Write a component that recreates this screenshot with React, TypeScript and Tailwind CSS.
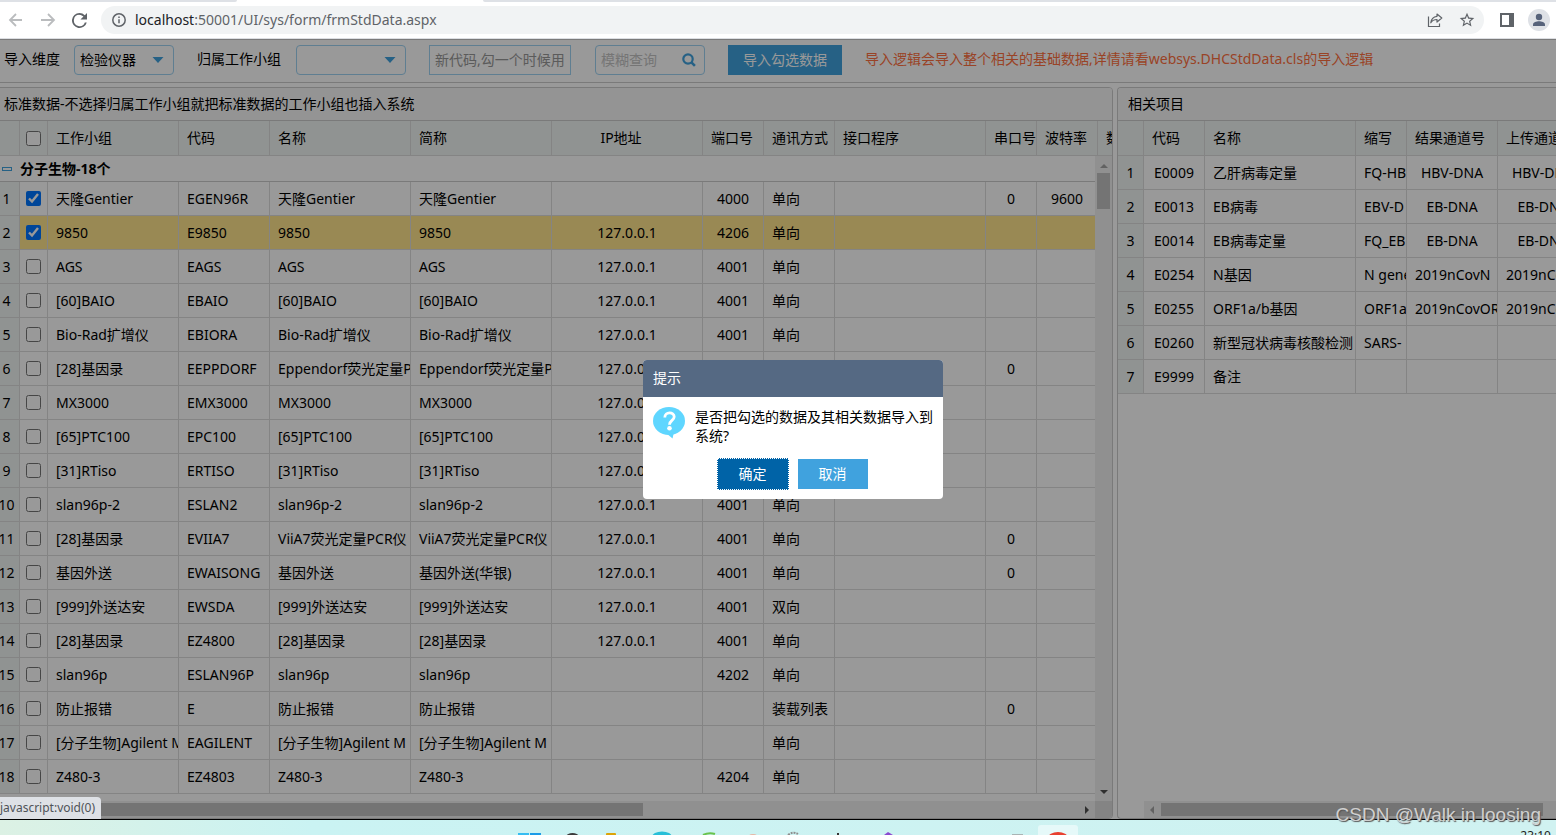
import React from "react";

type Align = "left" | "center";
type Column = { title: string; width: number; align: Align; headAlign?: Align };

const mainColumns: Column[] = [
  { title: "工作小组", width: 131, align: "left" },
  { title: "代码", width: 91, align: "left" },
  { title: "名称", width: 141, align: "left" },
  { title: "简称", width: 141, align: "left" },
  { title: "IP地址", width: 151, align: "center", headAlign: "center" },
  { title: "端口号", width: 61, align: "center" },
  { title: "通讯方式", width: 71, align: "left" },
  { title: "接口程序", width: 151, align: "left" },
  { title: "串口号", width: 51, align: "center" },
  { title: "波特率", width: 61, align: "center" },
  { title: "数据位", width: 61, align: "center" },
];

const ip = "127.0.0.1";
const mainRows: string[][] = [
  ["天隆Gentier", "EGEN96R", "天隆Gentier", "天隆Gentier", "", "4000", "单向", "", "0", "9600", ""],
  ["9850", "E9850", "9850", "9850", ip, "4206", "单向", "", "", "", ""],
  ["AGS", "EAGS", "AGS", "AGS", ip, "4001", "单向", "", "", "", ""],
  ["[60]BAIO", "EBAIO", "[60]BAIO", "[60]BAIO", ip, "4001", "单向", "", "", "", ""],
  ["Bio-Rad扩增仪", "EBIORA", "Bio-Rad扩增仪", "Bio-Rad扩增仪", ip, "4001", "单向", "", "", "", ""],
  ["[28]基因录", "EEPPDORF", "Eppendorf荧光定量PCR仪", "Eppendorf荧光定量PCR仪", ip, "4001", "单向", "", "0", "", ""],
  ["MX3000", "EMX3000", "MX3000", "MX3000", ip, "4001", "单向", "", "", "", ""],
  ["[65]PTC100", "EPC100", "[65]PTC100", "[65]PTC100", ip, "4001", "单向", "", "", "", ""],
  ["[31]RTiso", "ERTISO", "[31]RTiso", "[31]RTiso", ip, "4001", "单向", "", "", "", ""],
  ["slan96p-2", "ESLAN2", "slan96p-2", "slan96p-2", ip, "4001", "单向", "", "", "", ""],
  ["[28]基因录", "EVIIA7", "ViiA7荧光定量PCR仪", "ViiA7荧光定量PCR仪", ip, "4001", "单向", "", "0", "", ""],
  ["基因外送", "EWAISONG", "基因外送", "基因外送(华银)", ip, "4001", "单向", "", "0", "", ""],
  ["[999]外送达安", "EWSDA", "[999]外送达安", "[999]外送达安", ip, "4001", "双向", "", "", "", ""],
  ["[28]基因录", "EZ4800", "[28]基因录", "[28]基因录", ip, "4001", "单向", "", "", "", ""],
  ["slan96p", "ESLAN96P", "slan96p", "slan96p", "", "4202", "单向", "", "", "", ""],
  ["防止报错", "E", "防止报错", "防止报错", "", "", "装载列表", "", "0", "", ""],
  ["[分子生物]Agilent M", "EAGILENT", "[分子生物]Agilent M", "[分子生物]Agilent M", "", "", "单向", "", "", "", ""],
  ["Z480-3", "EZ4803", "Z480-3", "Z480-3", "", "4204", "单向", "", "", "", ""],
];

const itemColumns: Column[] = [
  { title: "代码", width: 61, align: "center" },
  { title: "名称", width: 151, align: "left" },
  { title: "缩写", width: 51, align: "left" },
  { title: "结果通道号", width: 91, align: "center" },
  { title: "上传通道号", width: 91, align: "center" },
];

const itemRows: string[][] = [
  ["E0009", "乙肝病毒定量", "FQ-HB", "HBV-DNA", "HBV-DNA"],
  ["E0013", "EB病毒", "EBV-D", "EB-DNA", "EB-DNA"],
  ["E0014", "EB病毒定量", "FQ_EB", "EB-DNA", "EB-DNA"],
  ["E0254", "N基因", "N gene", "2019nCovN", "2019nCovN"],
  ["E0255", "ORF1a/b基因", "ORF1ab", "2019nCovORF", "2019nCovORF"],
  ["E0260", "新型冠状病毒核酸检测", "SARS-", "", ""],
  ["E9999", "备注", "", "", ""],
];

const line = "border-[#dddddd]";
const alignClass: Record<Align, string> = { left: "text-left", center: "text-center" };

function Cols({ columns, withCheck }: { columns: Column[]; withCheck: boolean }) {
  return (
    <colgroup>
      <col className="w-[26px]" />
      {withCheck && <col className="w-7" />}
      {columns.map((c) => (
        <col key={c.title} style={{ width: c.width }} />
      ))}
    </colgroup>
  );
}

function HeadTable({ columns, withCheck }: { columns: Column[]; withCheck: boolean }) {
  return (
    <table className="w-px table-fixed border-separate border-spacing-0">
      <Cols columns={columns} withCheck={withCheck} />
      <thead>
        <tr className="h-[35px] bg-[#f1f5f4]">
          <th aria-label="序号" className={`border-r border-b ${line}`} />
          {withCheck && (
            <th className={`border-r border-b p-0 ${line}`}>
              <input type="checkbox" aria-label="全选" className="mx-auto block size-[15px]" />
            </th>
          )}
          {columns.map((c) => (
            <th
              key={c.title}
              scope="col"
              className={`overflow-hidden border-r border-b pl-2 font-normal whitespace-nowrap ${line} ${
                c.headAlign === "center" ? "pr-5 text-center" : "pr-0 text-left"
              }`}
            >
              {c.title}
            </th>
          ))}
        </tr>
      </thead>
    </table>
  );
}

function BodyRow({ index, row, columns, withCheck, checked, selected }: {
  index: number;
  row: string[];
  columns: Column[];
  withCheck: boolean;
  checked?: boolean;
  selected?: boolean;
}) {
  return (
    <tr className={`h-[34px] ${selected ? "bg-[#ffe48d]" : "bg-white"}`}>
      <td className={`border-r border-b bg-[#f1f5f4] p-0 text-center ${line}`}>{index + 1}</td>
      {withCheck && (
        <td className={`border-r border-b p-0 ${line}`}>
          <input
            type="checkbox"
            aria-label={row[0]}
            defaultChecked={checked}
            className="mx-auto block size-[15px]"
          />
        </td>
      )}
      {columns.map((c, i) => (
        <td
          key={c.title}
          className={`overflow-hidden border-r border-b px-2 py-0 whitespace-nowrap ${line} ${alignClass[c.align]}`}
        >
          {row[i]}
        </td>
      ))}
    </tr>
  );
}

function Caret({ dir, className }: { dir: "up" | "down" | "left" | "right"; className: string }) {
  const points = {
    up: "0,7 8,7 4,3",
    down: "0,2 8,2 4,6",
    left: "6,0 6,8 2,4",
    right: "2,0 2,8 6,4",
  }[dir];
  return (
    <svg viewBox="0 0 8 8" className={`size-2 ${className}`}>
      <polygon points={points} fill="currentColor" />
    </svg>
  );
}

function Combo({ id, value, className }: { id: string; value: string; className: string }) {
  return (
    <div className={`relative h-[30px] ${className}`}>
      <select
        id={id}
        defaultValue={value}
        className="h-full w-full appearance-none rounded-sm border border-[#9ed2f2] bg-white pl-[5px] text-sm text-black"
      >
        <option value={value}>{value}</option>
      </select>
      <svg viewBox="0 0 12 6" className="pointer-events-none absolute top-3 right-[10px] h-[6px] w-3">
        <polygon points="0.5,0 11.5,0 6,6" fill="#40a2de" />
      </svg>
    </div>
  );
}

function BrowserBar() {
  return (
    <header className="shrink-0 border-b border-[#dcdee2] bg-white">
      <div className="flex h-[2px]">
        <div className="w-[237px] rounded-br-sm bg-[#dee1e6]" />
        <div className="w-[246px]" />
        <div className="flex-1 rounded-bl-sm bg-[#dee1e6]" />
      </div>
      <div className="flex h-9 items-center pr-[6px] pl-2">
        <button aria-label="后退" className="text-[#babcbe]">
          <svg viewBox="0 0 16 16" className="size-4" fill="none" stroke="currentColor" strokeWidth="1.8">
            <path d="M14 8H2M8 2L2 8l6 6" />
          </svg>
        </button>
        <button aria-label="前进" className="ml-4 text-[#babcbe]">
          <svg viewBox="0 0 16 16" className="size-4" fill="none" stroke="currentColor" strokeWidth="1.8">
            <path d="M1 8h12M8 2l6 6-6 6" />
          </svg>
        </button>
        <button aria-label="重新加载" className="ml-4 text-[#5f6368]">
          <svg viewBox="4 4 16 16" className="size-[15px]" fill="currentColor">
            <path d="M17.65 6.35A7.96 7.96 0 0 0 12 4a8 8 0 1 0 7.73 10h-2.08A6 6 0 1 1 12 6c1.66 0 3.14.69 4.22 1.78L13 11h7V4z" />
          </svg>
        </button>
        <div className="ml-[14px] flex h-7 flex-1 items-center rounded-full bg-[#f1f3f4] pr-[9px] pl-[11px]">
          <svg viewBox="0 0 14 14" className="size-[14px] text-[#5f6368]" fill="none" stroke="currentColor" strokeWidth="1.5">
            <circle cx="7" cy="7" r="6.2" />
            <path d="M7 6.2v4M7 3.4V5" />
          </svg>
          <p className="ml-[9px] flex-1 text-sm leading-5 text-[#5f6368]">
            <span className="text-[#202124]">localhost</span>:50001/UI/sys/form/frmStdData.aspx
          </p>
          <button aria-label="分享" className="text-[#5f6368]">
            <svg viewBox="0 0 16 16" className="size-4" fill="none" stroke="currentColor" strokeWidth="1.2">
              <path d="M1.500 4.500v10h11v-3" />
              <path d="M10 2l4.800 4-4.800 4V7.500C7 7.500 5 8.500 3.800 10.800 4.200 7.200 6 4.800 10 4.300z" strokeLinejoin="round" />
            </svg>
          </button>
          <button aria-label="收藏" className="ml-4 text-[#5f6368]">
            <svg viewBox="1 1 22 22" className="size-4" fill="currentColor">
              <path d="M22 9.240l-7.190-.62L12 2 9.190 8.630 2 9.240l5.460 4.730L5.820 21 12 17.270 18.180 21l-1.630-7.030L22 9.240zM12 15.400l-3.760 2.270 1-4.280-3.320-2.880 4.380-.38L12 6.100l1.710 4.040 4.380.38-3.320 2.880 1 4.280L12 15.400z" />
            </svg>
          </button>
        </div>
        <button aria-label="侧边栏" className="ml-4 text-[#5f6368]">
          <svg viewBox="0 0 14 14" className="size-[14px]" fill="currentColor">
            <path d="M0 0h14v14H0zM2 2v10h7V2z" fillRule="evenodd" />
          </svg>
        </button>
        <button aria-label="用户" className="ml-[14px] text-[#56627a]">
          <svg viewBox="0 0 22 22" className="size-[22px]">
            <circle cx="11" cy="11" r="11" fill="#dee1e6" />
            <circle cx="11" cy="8" r="3.200" fill="currentColor" />
            <path d="M5 17v-1.500c0-2.300 3.500-3.300 6-3.300s6 1 6 3.300V17z" fill="currentColor" />
          </svg>
        </button>
      </div>
    </header>
  );
}

function Toolbar() {
  return (
    <form className="flex h-11 shrink-0 items-center border-y border-[#cccccc] bg-white pb-[2px] pl-1">
      <label htmlFor="dimension" className="pb-[2px]">导入维度</label>
      <Combo id="dimension" value="检验仪器" className="ml-[14px] w-[100px]" />
      <label htmlFor="group" className="ml-[23px] pb-[2px]">归属工作小组</label>
      <Combo id="group" value="" className="ml-[15px] w-[110px]" />
      <input
        aria-label="新代码"
        placeholder="新代码,勾一个时候用"
        className="ml-[23px] h-[30px] w-[142px] border border-[#9ed2f2] bg-white px-[5px] pb-[2px] text-sm placeholder:text-[#989898]"
      />
      <div className="ml-6 flex h-[30px] w-[110px] items-center rounded-sm border border-[#9ed2f2] bg-white pr-2 pl-[5px]">
        <input
          aria-label="模糊查询"
          placeholder="模糊查询"
          className="min-w-0 flex-1 bg-transparent text-sm placeholder:text-[#c4c4c4]"
        />
        <button type="button" aria-label="查询" className="text-[#40a2de]">
          <svg viewBox="0 0 14 14" className="size-[14px]" fill="none" stroke="currentColor">
            <circle cx="6" cy="6" r="4.700" strokeWidth="2.200" />
            <path d="M9.200 9.200l3.700 3.700" strokeWidth="2.600" />
          </svg>
        </button>
      </div>
      <button type="button" className="ml-[23px] h-[30px] bg-[#40a2de] px-[15px] text-white">
        导入勾选数据
      </button>
      <span className="ml-[23px] pb-[2px] whitespace-nowrap text-[#ff7040]">
        导入逻辑会导入整个相关的基础数据,详情请看websys.DHCStdData.cls的导入逻辑
      </span>
    </form>
  );
}

function MainPanel() {
  return (
    <section className="-ml-[7px] flex min-w-0 flex-1 flex-col overflow-hidden rounded border border-[#cccccc] bg-white">
      <h2 className="h-[33px] shrink-0 border-b border-[#cccccc] bg-[#f7f7f7] pl-[10px] leading-8">
        标准数据-不选择归属工作小组就把标准数据的工作小组也插入系统
      </h2>
      <div className="shrink-0 overflow-hidden bg-[#f1f5f4]">
        <HeadTable columns={mainColumns} withCheck />
      </div>
      <div className="flex min-h-0 flex-1">
        <div className="min-w-0 flex-1 overflow-hidden">
          <div className="flex h-[26px] items-center border-b border-[#cccccc] pl-2 font-bold">
            <span className="h-1 w-[10px] border border-[#40a2de]" />
            <span className="ml-2">分子生物-18个</span>
          </div>
          <table className="w-px table-fixed border-separate border-spacing-0">
            <Cols columns={mainColumns} withCheck />
            <tbody>
              {mainRows.map((row, i) => (
                <BodyRow
                  key={i}
                  index={i}
                  row={row}
                  columns={mainColumns}
                  withCheck
                  checked={i < 2}
                  selected={i === 1}
                />
              ))}
            </tbody>
          </table>
        </div>
        <div className="flex w-[17px] shrink-0 flex-col items-center bg-[#f1f1f1] py-[5px]">
          <Caret dir="up" className="text-[#a3a3a3]" />
          <div className="mt-1 h-9 w-[13px] bg-[#c1c1c1]" />
          <Caret dir="down" className="mt-auto text-[#505050]" />
        </div>
      </div>
      <div className="flex h-[17px] shrink-0 bg-[#f1f1f1]">
        <div className="flex min-w-0 flex-1 items-center justify-between pr-1">
          <div className="ml-6 h-[13px] w-[57%] bg-[#c1c1c1]" />
          <Caret dir="right" className="text-[#505050]" />
        </div>
        <div className="w-[17px] bg-[#dcdcdc]" />
      </div>
    </section>
  );
}

function ItemPanel() {
  return (
    <section className="flex w-[439px] shrink-0 flex-col overflow-hidden rounded-l border border-r-0 border-[#cccccc] bg-white">
      <h2 className="h-[33px] shrink-0 border-b border-[#cccccc] bg-[#f7f7f7] pl-[10px] leading-8">相关项目</h2>
      <div className="shrink-0 overflow-hidden">
        <HeadTable columns={itemColumns} withCheck={false} />
      </div>
      <div className="min-h-0 flex-1 overflow-hidden">
        <table className="w-px table-fixed border-separate border-spacing-0">
          <Cols columns={itemColumns} withCheck={false} />
          <tbody>
            {itemRows.map((row, i) => (
              <BodyRow key={i} index={i} row={row} columns={itemColumns} withCheck={false} />
            ))}
          </tbody>
        </table>
      </div>
      <div className="ml-[26px] flex h-[17px] shrink-0 items-center bg-[#f1f1f1] pr-[13px] pl-1">
        <Caret dir="left" className="text-[#a3a3a3]" />
        <div className="ml-[5px] h-[13px] flex-1 bg-[#c1c1c1]" />
      </div>
    </section>
  );
}

function ConfirmDialog() {
  return (
    <div
      role="dialog"
      aria-labelledby="confirm-title"
      className="absolute top-[321px] left-1/2 ml-[-135px] w-[300px] overflow-hidden rounded bg-white"
    >
      <h3 id="confirm-title" className="h-[37px] bg-[#556983] pl-[10px] leading-9 text-white">
        提示
      </h3>
      <div className="flex gap-[10px] px-[10px] pt-[10px]">
        <svg viewBox="0 0 32 32" className="size-8 shrink-0">
          <ellipse cx="16" cy="14" rx="16" ry="14" fill="#5fd6ff" />
          <path d="M13 26l6.500 5.500L21 25z" fill="#5fd6ff" />
          <path d="M11.800 10.500c0-6 9.400-6 9.400-.8 0 3.800-4.700 3.600-4.700 8" fill="none" stroke="#fff" strokeWidth="2.800" />
          <circle cx="16.500" cy="21.300" r="2.300" fill="#fff" />
        </svg>
        <p className="leading-[19px]">是否把勾选的数据及其相关数据导入到系统?</p>
      </div>
      <div className="flex items-center justify-center gap-[9px] pt-[13px] pr-[2px] pb-[9px]">
        <button className="h-8 w-[72px] border border-dotted border-white bg-[#0063a7] text-white">确定</button>
        <button className="h-[30px] w-[70px] bg-[#40a2de] text-white">取消</button>
      </div>
    </div>
  );
}

function Taskbar() {
  return (
    <footer className="relative h-[15px] shrink-0 overflow-hidden bg-linear-to-r from-[#dcf1e4] via-[#caf3f3] via-20% to-[#d0f2f1]">
      <svg viewBox="0 0 600 15" className="absolute top-0 left-[500px] h-[15px] w-[600px]">
        <rect x="18" y="13" width="11" height="2" fill="#35bdf2" />
        <rect x="30" y="13" width="11" height="2" fill="#1b9be8" />
        <ellipse cx="72.500" cy="16" rx="6" ry="3" fill="#3b3b3b" />
        <rect x="106" y="13" width="10" height="4" rx="1" fill="#dca408" />
        <ellipse cx="162" cy="17" rx="10" ry="5.500" fill="#28bfd8" />
        <path d="M203 15q6-3 12-1" fill="none" stroke="#69c34d" strokeWidth="2" />
        <ellipse cx="253" cy="16" rx="4" ry="2" fill="#e6b6a4" />
        <path d="M288 15q5-4 10-1" fill="none" stroke="#8d8d8d" strokeWidth="2" strokeDasharray="2 1" />
        <rect x="337" y="13" width="2" height="2" fill="#333" />
        <path d="M384 15l4-3 5 3z" fill="#8a4bd0" />
        <rect x="512" y="14" width="11" height="1" fill="#a9b4b4" />
        <rect x="538" y="5" width="40" height="16" rx="3" fill="#e6f9f9" />
        <ellipse cx="558" cy="18" rx="10" ry="6" fill="#e8402f" />
      </svg>
      <span className="absolute top-2 right-[5px] text-xs leading-4 text-[#222]">23:10</span>
    </footer>
  );
}

export default function App() {
  return (
    <div
      className="relative flex h-screen flex-col overflow-hidden text-sm leading-5 text-black"
      style={{ fontFamily: '"Noto Sans", "Noto Sans CJK SC", sans-serif' }}
    >
      <BrowserBar />
      <main className="relative flex min-h-0 flex-1 flex-col overflow-hidden border-b border-black bg-white">
        <Toolbar />
        <div className="flex min-h-0 flex-1 gap-1 pt-1">
          <MainPanel />
          <ItemPanel />
        </div>
        <div className="absolute inset-0 bg-black/40" />
        <ConfirmDialog />
        <div className="absolute bottom-0 left-0 rounded-tr bg-[#dee1e6] pr-[6px] text-xs leading-[22px] text-[#4f5358]">
          javascript:void(0)
        </div>
      </main>
      <Taskbar />
      <div className="absolute right-[15px] bottom-2 font-['Liberation_Sans'] text-[19px] leading-6 text-[#d0d0d0] [text-shadow:1px_1px_1px_#555]">
        CSDN @Walk in loosing
      </div>
    </div>
  );
}
